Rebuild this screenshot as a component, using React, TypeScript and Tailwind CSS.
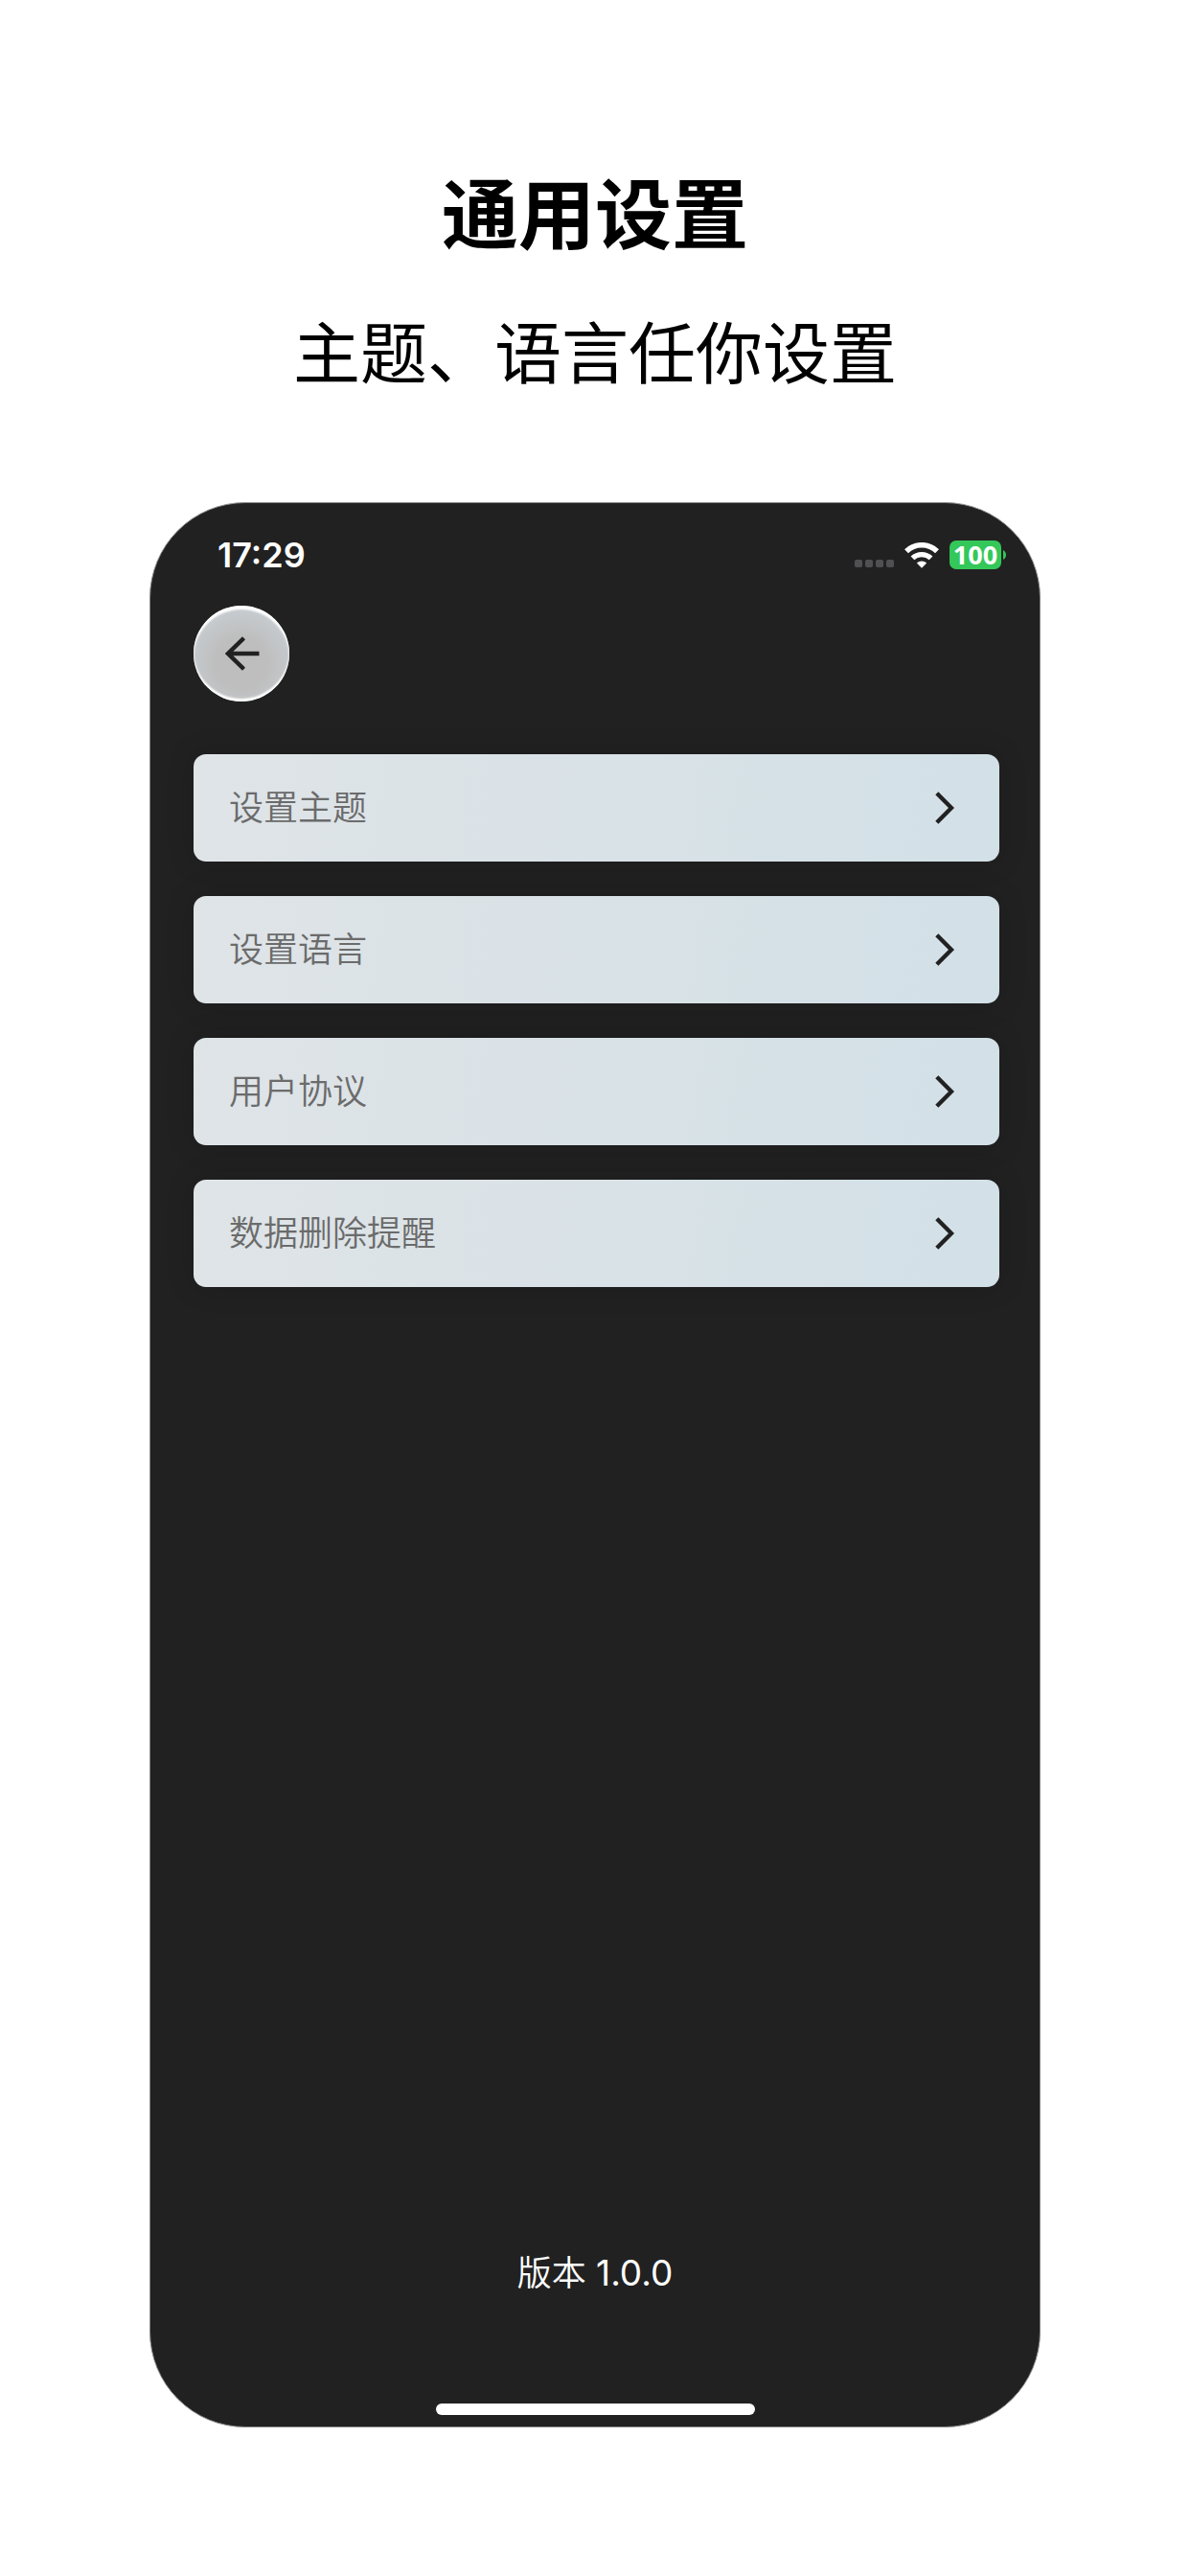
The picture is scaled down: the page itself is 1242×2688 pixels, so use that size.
const items = ['设置主题', '设置语言', '用户协议', '数据删除提醒'];

const StatusBar: React.FC = () => {
    return (
        <div className="flex items-center justify-between pl-[70px] pr-[35px] pt-[31px]">
            <span className="text-4xl leading-[46px] font-semibold">17:29</span>
            <div className="flex items-center">
                <div className="flex gap-[3px] pt-[18px]">
                    {[0, 1, 2, 3].map((dot) => (
                        <span key={dot} className="size-2 rounded-[2px] bg-[#505052]"></span>
                    ))}
                </div>
                <svg className="ml-[11px] w-9 h-[27px]" viewBox="0 0 36 27" fill="none" stroke="white">
                    <path d="M2 9.2a23 23 0 0 1 32 0" strokeWidth="5.6" />
                    <path d="M8.4 16.4a14 14 0 0 1 19.2 0" strokeWidth="5.4" />
                    <path d="M12.8 21.6a7.5 7.5 0 0 1 10.4 0L18 26.8z" fill="white" stroke="none" />
                </svg>
                <span className="ml-[11px] w-[54px] h-[30px] rounded-[7px] bg-[#34c759] font-['Noto_Sans',sans-serif] text-[27px] leading-[30px] font-bold text-center">
                    100
                </span>
                <svg className="ml-[2px] w-[3px] h-[10px]" viewBox="0 0 3 10">
                    <path d="M0 0C4 2 4 8 0 10z" fill="#34c759" />
                </svg>
            </div>
        </div>
    );
};

const App: React.FC = () => {
    return (
        <div className="min-h-screen flex flex-col items-center bg-white px-6 pt-[174px] pb-[155px] font-['Inter','Noto_Sans_CJK_SC',sans-serif]">
            <h1 className="text-[80px] leading-[100px] font-bold text-black text-center">通用设置</h1>
            <p className="mt-[52px] text-[70px] leading-[88px] text-black text-center">主题、语言任你设置</p>

            <main className="mt-[110px] w-full max-w-[930px] flex-1 flex flex-col rounded-[100px] border border-[#8a8a8a] bg-[#212121] text-white">
                <StatusBar />

                <div className="pl-[45px] pr-[42px] pt-[30px]">
                    <button
                        type="button"
                        aria-label="返回"
                        className="flex size-[100px] items-center justify-center rounded-full bg-[radial-gradient(circle_at_50%_60%,#bebebe_35%,#c6cbcf_70%)] shadow-[inset_0_4px_2px_#fff,inset_0_-3px_2px_#fff]"
                    >
                        <svg className="ml-px w-9 h-9" viewBox="0 0 36 36" fill="none" stroke="#212121" strokeWidth="4.4">
                            <path d="M35.5 18H3M19.5 1.8L3 18l16.5 16.2" />
                        </svg>
                    </button>

                    <nav className="mt-[55px] flex flex-col gap-9">
                        {items.map((item) => (
                            <button
                                key={item}
                                type="button"
                                className="flex h-[112px] items-center justify-between rounded-[13px] bg-[linear-gradient(100deg,#dfe4e7,#d9e2e7_50%,#d2e0e7)] pl-[37px] pr-[47px] shadow-[0_0_30px_rgba(0,0,0,0.15)]"
                            >
                                <span className="text-4xl font-[350] text-[#6b6b6b]">{item}</span>
                                <svg className="w-5 h-[34px]" viewBox="0 0 20 34" fill="none" stroke="#212121" strokeWidth="4.4">
                                    <path d="M1.8 1.8L17 17 1.8 32.2" />
                                </svg>
                            </button>
                        ))}
                    </nav>
                </div>

                <p className="mt-auto text-[37px] leading-[44px] text-center">
                    <span className="text-4xl font-[350]">版本</span> 1.0.0
                </p>
                <div className="mt-[114px] mb-3 h-3 w-[333px] self-center rounded-full bg-white"></div>
            </main>
        </div>
    );
};

export default App;
